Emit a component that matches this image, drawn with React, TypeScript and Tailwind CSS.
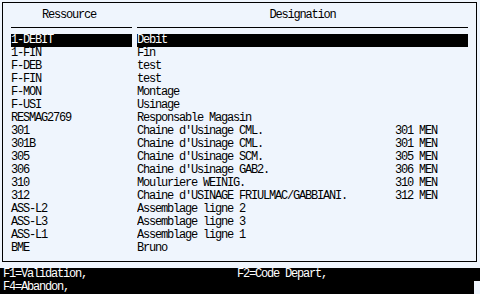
import React from 'react';

interface Row {
  code: string;
  label: string;
  extra?: string;
}

const ROWS: Row[] = [
  { code: '1-DEBIT', label: 'Debit' },
  { code: '1-FIN', label: 'Fin' },
  { code: 'F-DEB', label: 'test' },
  { code: 'F-FIN', label: 'test' },
  { code: 'F-MON', label: 'Montage' },
  { code: 'F-USI', label: 'Usinage' },
  { code: 'RESMAG2769', label: 'Responsable Magasin' },
  { code: '301', label: "Chaine d'Usinage CML.", extra: '301 MEN' },
  { code: '301B', label: "Chaine d'Usinage CML.", extra: '301 MEN' },
  { code: '305', label: "Chaine d'Usinage SCM.", extra: '305 MEN' },
  { code: '306', label: "Chaine d'Usinage GAB2.", extra: '306 MEN' },
  { code: '310', label: 'Mouluriere WEINIG.', extra: '310 MEN' },
  { code: '312', label: "Chaine d'USINAGE FRIULMAC/GABBIANI.", extra: '312 MEN' },
  { code: 'ASS-L2', label: 'Assemblage ligne 2' },
  { code: 'ASS-L3', label: 'Assemblage ligne 3' },
  { code: 'ASS-L1', label: 'Assemblage ligne 1' },
  { code: 'BME', label: 'Bruno' },
];

const App: React.FC = () => {
  const selected = 0;

  return (
    <div
      className="w-[480px] h-[294px] bg-[#eff5fd] text-black overflow-hidden flex flex-col text-[12px] leading-[13px] tracking-[-1.2px] whitespace-pre"
      style={{ fontFamily: '"Liberation Mono", "DejaVu Sans Mono", monospace' }}
    >
      {/* list frame */}
      <div className="ml-[2px] mt-[2px] w-[475px] h-[260px] border border-black flex flex-col">
        <div className="flex pt-[6px] ml-[8px]">
          <div className="w-[121px] pl-[31px]">Ressource</div>
          <div className="w-[331px] ml-[5px] text-center">Designation</div>
        </div>
        <div className="flex mt-[5px] ml-[8px]">
          <div className="w-[121px] h-px bg-black" />
          <div className="w-[331px] ml-[5px] h-px bg-black" />
        </div>
        <div className="flex flex-col mt-[6px] ml-[8px]">
          {ROWS.map((r, i) => {
            const hl = i === selected ? 'bg-black text-white' : '';
            return (
              <div key={r.code} className="flex h-[13px]">
                <div className={`w-[121px] ${hl}`}>{r.code}</div>
                <div className={`w-[331px] ml-[5px] flex ${hl}`}>
                  <span className="w-[258px] overflow-hidden">{r.label}</span>
                  {r.extra && <span>{r.extra}</span>}
                </div>
              </div>
            );
          })}
        </div>
      </div>

      {/* function keys */}
      <div className="mt-[6px] flex-1 bg-black text-white relative">
        <div className="flex h-[13px]">
          <span className="w-[237px] pl-[3px]">F1=Validation,</span>
          <span>F2=Code Depart,</span>
        </div>
        <div className="flex h-[13px]">
          <span className="pl-[3px]">F4=Abandon,</span>
        </div>
        <div className="absolute right-0 bottom-0 w-[6px] h-[13px] bg-[#eff5fd]" />
      </div>
    </div>
  );
};

export default App;
